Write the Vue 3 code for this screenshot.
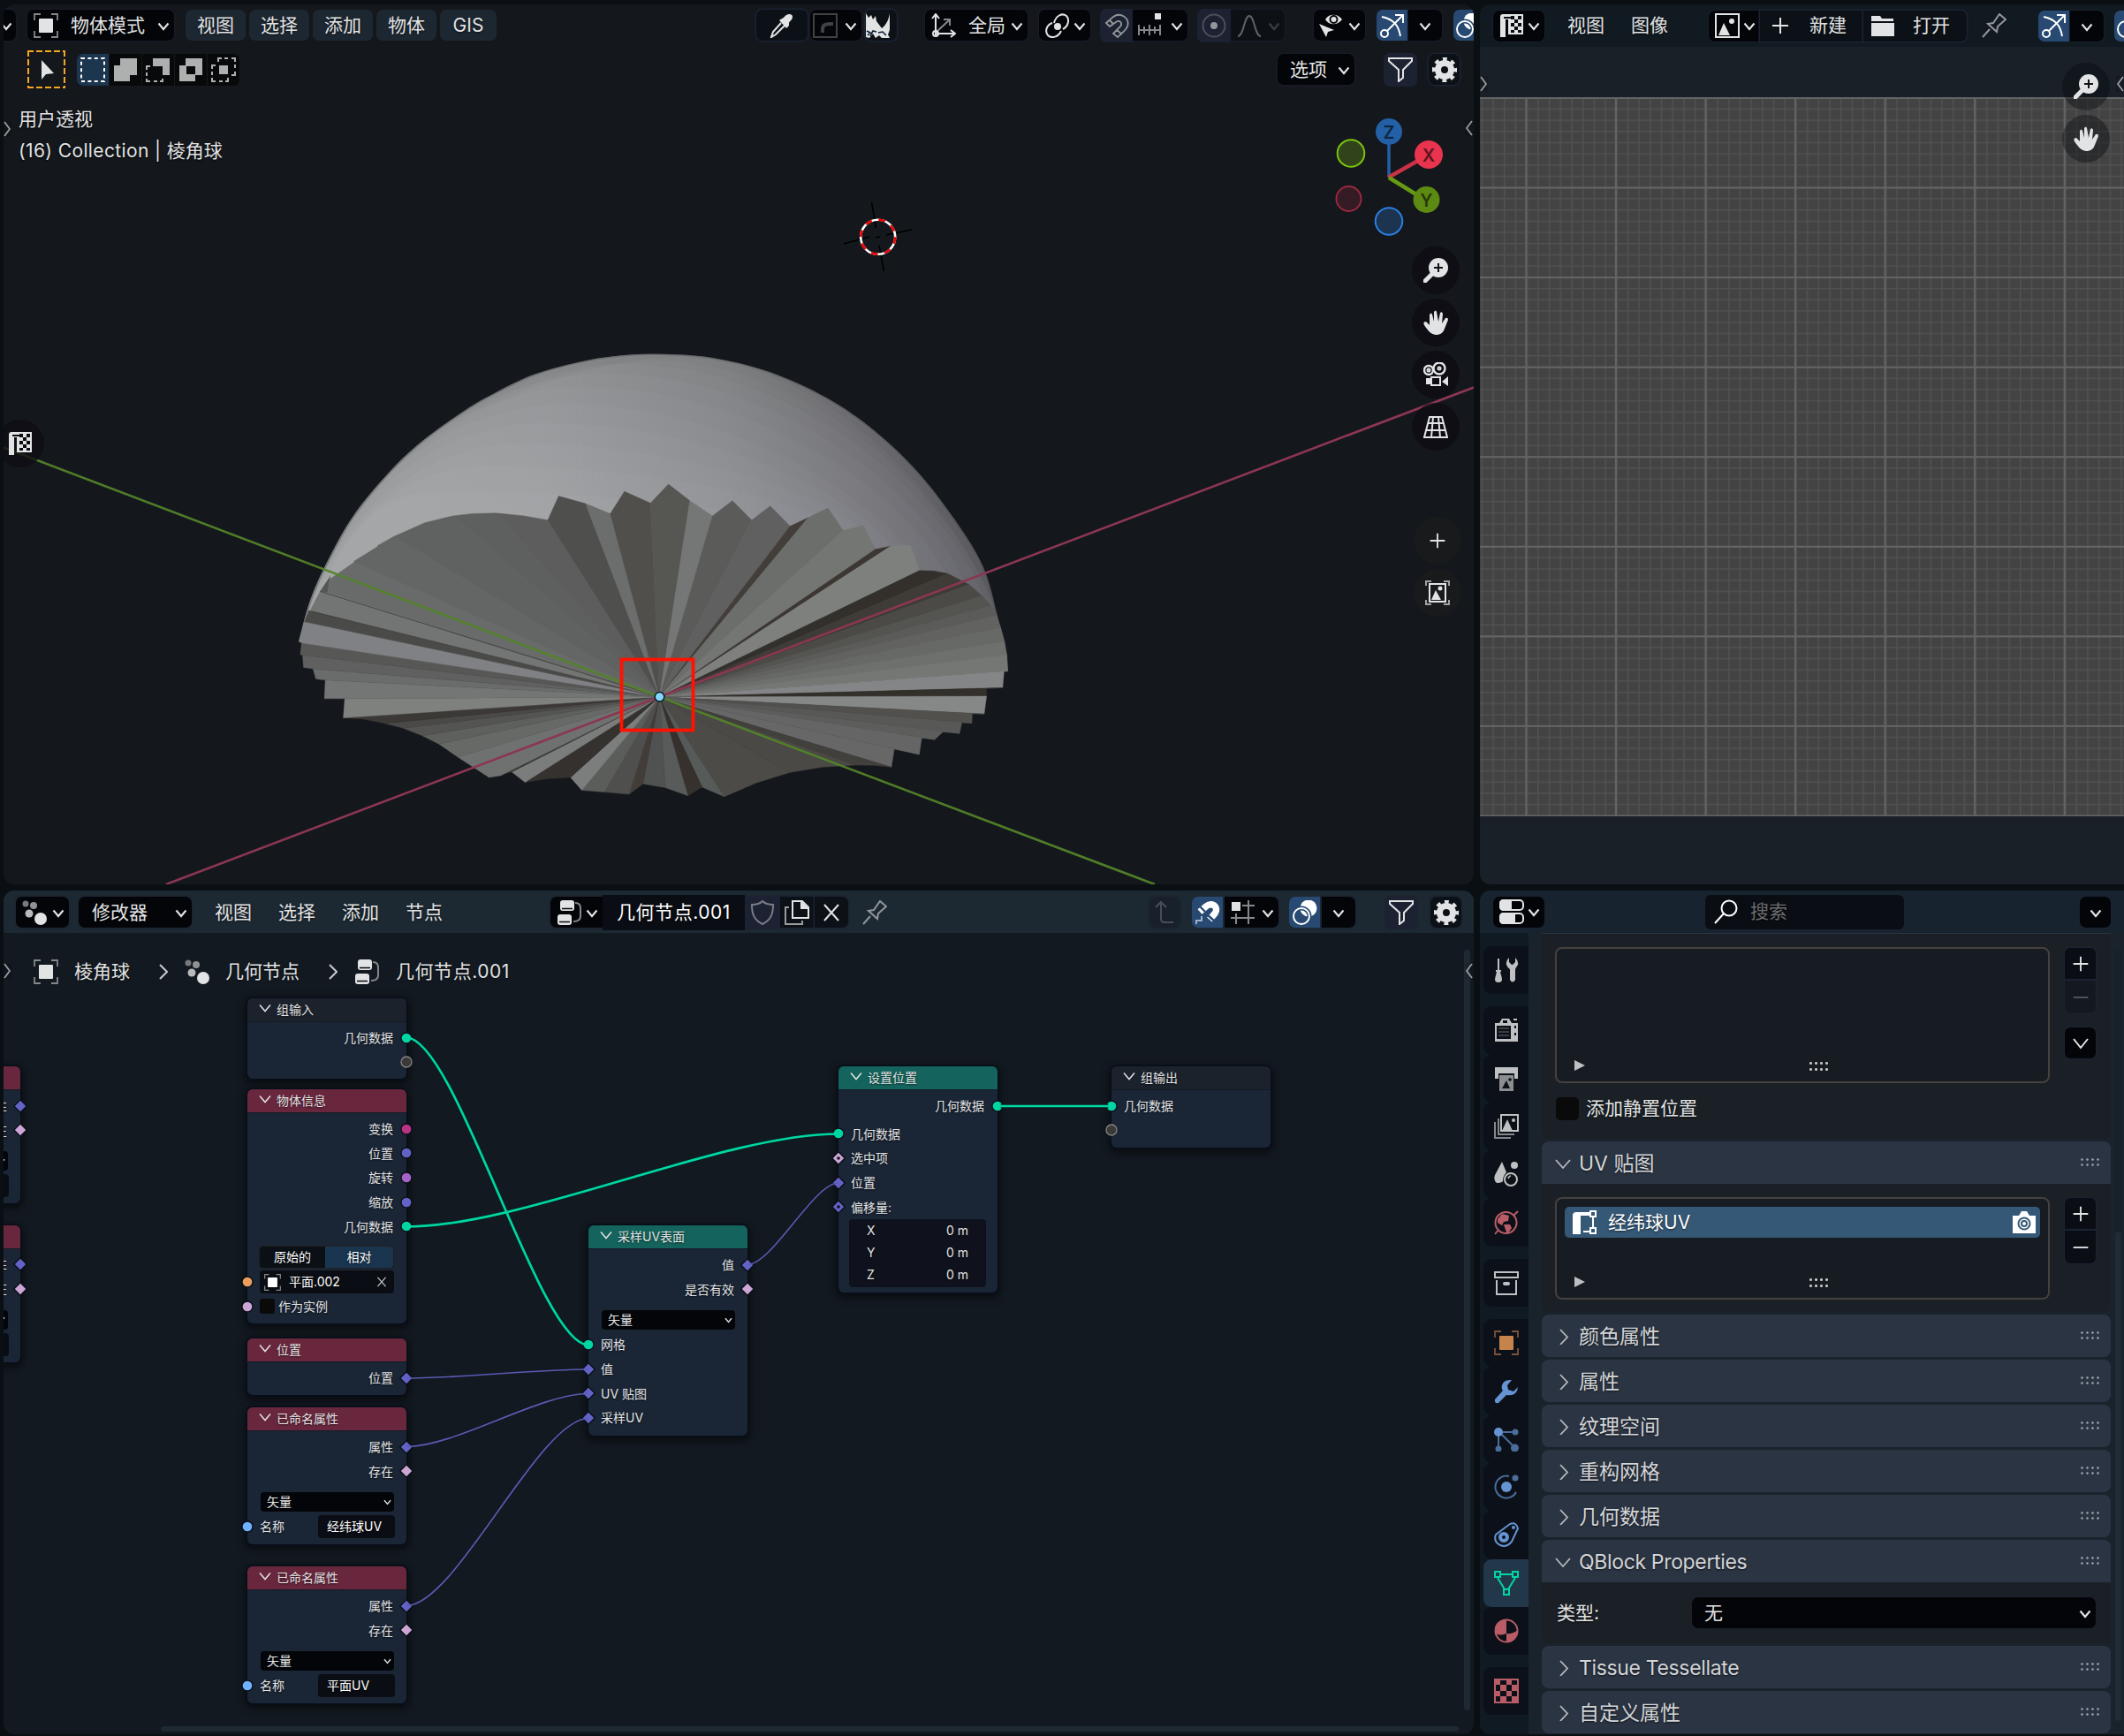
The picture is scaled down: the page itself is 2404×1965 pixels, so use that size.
<script setup>
const icons = {
  object: '<g stroke="#85888b" stroke-width="1.8"><path d="M1 8V1H8M20 1H27V8M27 20V27H20M8 27H1V20"/></g><rect x="6" y="6" width="16" height="16" rx="1" fill="currentColor" stroke="none"/>',
  cursor: '<path d="M8 3V25L13 19L22 18Z" fill="currentColor" stroke="none"/>',
  box: '<rect x="1" y="1" width="26" height="26" stroke-width="2" stroke-dasharray="4 3.4"/>',
  union: '<path d="M8 1H27V20H19V27H1V9H8Z" fill="currentColor" stroke="none"/>',
  sub: '<path d="M8 1H27V20H19V10H8Z" fill="currentColor" stroke="none"/><path d="M5 10H1V14M1 17V21M1 24V27H5M9 27H13M16 27H19V24" stroke-width="2"/>',
  diff: '<path d="M8 1H27V20H19V27H1V9H8ZM9 10V19H19V10Z" fill="currentColor" fill-rule="evenodd" stroke="none"/>',
  inter: '<rect x="9" y="9" width="10" height="10" fill="currentColor" stroke="none"/><path d="M8 5V1H12M15 1H19M23 1H27V5M27 8V12M27 16V20H23M5 9H1V13M1 16V20M1 23V27H5M9 27H13M16 27H19V23" stroke-width="2"/>',
  dropper: '<path d="M16 5C19 0 26 0 26 4C26 8 22 9 22 11L22 14L19 17L11 8L14 6Z" fill="currentColor" stroke="none"/><path d="M13 11L4 21L2 27L7 24L17 14"/>',
  corner: '<rect x="1" y="1" width="26" height="26" stroke="#3f4143"/><path d="M11 22V18C11 13 14 12 23 12" stroke="#3f4143" stroke-width="4"/>',
  rhino: '<path d="M1 0L4 5L7 2L9 7L12 3L13 9L19 17C24 13 27 7 28 0C30 9 29 18 26 24L28 28H19L16 25L12 28L9 23L5 28L1 27Z" fill="currentColor" stroke="none"/><path d="M2 20L6 22L3 25M6 26L9 20L13 21M15 22L20 21L24 25" stroke="#0a2038" stroke-width="1.600"/>',
  axes: '<path d="M5 26V2M1 6L5 1L9 6M5 23H26M22 19L27 23L22 27"/><path d="M6 21L20 8M14 7H21V14" stroke="#85888b"/><circle cx="5" cy="23" r="3"/>',
  pivot: '<circle cx="14" cy="15" r="4" fill="currentColor" stroke="none"/><path d="M10 11C12 3 19 -1 24 3C28 7 26 15 20 18M18 20C15 27 7 29 3 25C-1 20 2 13 8 11"/>',
  magnet: '<path d="M2 11L10 4C19 -2 29 6 26 15C24 20 19 23 15 27L10 23L18 15C21 11 17 7 13 10L6 15ZM6 8L10 12M14 19L19 23" stroke-width="1.8"/>',
  incr: '<path d="M1 19H27M2 13V25M8 15V23M14 13V25M20 15V23M26 13V25" stroke="#85888b"/><rect x="20" y="0" width="7" height="7" fill="currentColor" stroke="none"/>',
  prop: '<circle cx="14" cy="14" r="12.5" stroke="#4a4f58"/><circle cx="14" cy="14" r="4" fill="currentColor" stroke="none"/>',
  curve: '<path d="M1 26C8 26 8 3 14 3S20 26 27 26"/>',
  eye: '<path d="M8 7C12 0 22 0 27 7C22 14 12 14 8 7Z" fill="currentColor" stroke="none"/><circle cx="17.500" cy="7" r="4" fill="none" stroke="#06080b" stroke-width="2"/><path d="M1 12L18 19L11 21L9 27Z" fill="currentColor" stroke="none"/>',
  gizmo: '<path d="M2 4C16 7 21 14 23 26"/><circle cx="5" cy="23" r="4"/><path d="M8 20L26 2M17 2H26V11"/>',
  overlay: '<circle cx="18" cy="9" r="9.500" fill="currentColor" stroke="none"/><circle cx="10" cy="18" r="9" stroke="#284a72" stroke-width="5"/><circle cx="10" cy="18" r="9"/>',
  filter: '<path d="M1 1H27V4L17 14V23L12 27V14L1 4Z"/>',
  gear: '<circle cx="14" cy="14" r="7.500" stroke-width="7"/><circle cx="14" cy="14" r="12.200" stroke-width="4" stroke-dasharray="4.800 4.780" stroke-dashoffset="2.400"/>',
  uv: '<path d="M4 1H27V24H10V7H7V27H1V4Q1 1 4 1Z" fill="currentColor" stroke="none"/><path d="M13 3h4v4h-4zM21 3h4v4h-4zM17 7h4v4h-4zM13 11h4v4h-4zM21 11h4v4h-4zM17 15h4v4h-4zM13 19h4v3h-4zM21 19h4v3h-4zM5 4h8v2h-8z" fill="#0a0d11" stroke="none"/>',
  image: '<rect x="1" y="1" width="26" height="26"/><path d="M4 25L10 11L17 25Z" fill="currentColor" stroke="none"/><circle cx="19" cy="9" r="3" fill="currentColor" stroke="none"/>',
  plus: '<path d="M14 5V23M5 14H23"/>',
  minus: '<path d="M5 14H23"/>',
  folder: '<path d="M1 3H11L13 6H26V9H1ZM1 11H27V26H1Z" fill="currentColor" stroke="none"/>',
  pin: '<path d="M1 27L9 18M7 12L17 21L18 15L27 7L20 1L13 11Z"/>',
  dots: '<circle cx="4" cy="4" r="3.500" fill="#77797c" stroke="none"/><circle cx="13" cy="6" r="4" fill="#8f9193" stroke="none"/><circle cx="8" cy="15" r="4.500" fill="#b9babb" stroke="none"/><circle cx="21" cy="21" r="7" fill="currentColor" stroke="none"/>',
  tree: '<rect x="4" y="0" width="16" height="12" rx="3" fill="currentColor" stroke="none"/><rect x="1" y="16" width="16" height="12" rx="3" fill="currentColor" stroke="none"/><path d="M6 9.500H18M3 24.500H15" stroke="#06080b" stroke-width="1.600"/><path d="M21 3Q27 3 27 9V18Q27 24 19 24" stroke="#85888b"/>',
  shield: '<path d="M14 1C17 4 22 5 26 5C26 15 24 22 14 27C4 22 2 15 2 5C6 5 11 4 14 1Z"/>',
  copy: '<path d="M9 1H20L27 8V20H9Z"/><path d="M19 1V9H27" fill="currentColor"/><path d="M5 8H1V27H20V23" stroke="#9a9c9e"/>',
  close: '<path d="M6 5L22 23M22 5L6 23"/>',
  up: '<path d="M9 2V21Q9 25 13 25H23M3 8L9 2L15 8"/>',
  snap: '<path d="M5 13L12 7C19 1 27 8 22 15L16 22" stroke-width="7.500"/><path d="M11 13L4 6M22 24L13 16" stroke="#284a72" stroke-width="2.400"/><path d="M1 27V23H7V18" stroke="#9fb1c6"/>',
  snapgrid: '<path d="M13 6H27M20 0V27M0 20H27M6 15V27" stroke="#85888b"/><rect x="1" y="2" width="10" height="10" fill="currentColor" stroke="none"/>',
  toggles: '<rect x="1" y="1" width="26" height="11" rx="4"/><path d="M5 1H13V12H5Q1 12 1 8V5Q1 1 5 1Z" fill="currentColor"/><rect x="1" y="16" width="26" height="11" rx="4"/><path d="M5 16H17V27H5Q1 27 1 23V20Q1 16 5 16Z" fill="currentColor"/>',
  search: '<circle cx="17" cy="10" r="8.500"/><path d="M11 16L1 27"/>',
  zoom: '<circle cx="17" cy="11" r="11" fill="currentColor" stroke="none"/><path d="M10 18L2 26" stroke-width="5" stroke-linecap="round"/><path d="M17 6V16M12 11H22" stroke="#101216"/>',
  hand: '<path d="M7 17L7 5Q9 2 10 5L12 13V2Q14 -1 15 2L17 13L19 3Q21 1 22 4L21 15L25 9Q28 8 28 11L24 21C22 27 18 28 14 28C8 27 5 23 1 17Q-1 13 3 13Z" fill="currentColor" stroke="none"/>',
  camera: '<circle cx="6" cy="9" r="5" stroke-width="2.400"/><circle cx="18" cy="7" r="6.500" stroke-width="2.400"/><circle cx="6" cy="9" r="1.500"/><circle cx="18" cy="7" r="1.500"/><rect x="9" y="17" width="10" height="9"/><path d="M3 18V25H8V18ZM28 16V27L21 22Z" fill="currentColor" stroke="none"/>',
  grid: '<path d="M7 3H21L27 26H1ZM11 3L9 26M17 3L19 26M6 10H23M3 18H25"/>',
  viewimg: '<g stroke="#a0a2a4"><path d="M1 6V1H7M21 1H27V6M27 22V27H21M7 27H1V22"/></g><rect x="5" y="4" width="18" height="20"/><path d="M7 22L12 11L18 22Z" fill="currentColor" stroke="none"/><circle cx="17" cy="9" r="2.500" fill="currentColor" stroke="none"/>',
  tool: '<path d="M5 1V14M2 15H8" /><path d="M3 16H7L8 20Q11 28 5 28T2 20Z" fill="currentColor" stroke="none"/><path d="M17 0V5L20 8H21L24 5V0Q28 4 27 8Q25 11 24 13V25Q21 30 18 25V13Q15 11 14 8Q13 4 17 0Z" fill="currentColor" stroke="none"/>',
  render: '<path d="M1 6H6L9 1H17L20 6H27V27H1ZM10 3V6H15V3ZM3 9V24H19V9ZM23 9V12H25V9ZM23 17V20H25V17Z" fill="currentColor" fill-rule="evenodd" stroke="none"/><path d="M5 12H17M5 16H17M5 20H17" stroke-width="1.200" stroke="#666a6f"/><path d="M22 2H26"/>',
  output: '<path d="M1 1H27V14H23V8H5V14H1Z" fill="currentColor" stroke="none"/><path d="M6 10H22V28H6Z" fill="#8b8d90" stroke="none"/><path d="M9 25L14 16L18 25Z" fill="#0c1119" stroke="none"/><circle cx="18" cy="15" r="1.800" fill="#0c1119" stroke="none"/>',
  layers: '<rect x="8" y="1" width="19" height="18"/><path d="M9 19L15 6L21 19Z" fill="currentColor" stroke="none"/><circle cx="22" cy="7" r="2" fill="currentColor" stroke="none"/><path d="M5 5V23H23M1 9V27H19" stroke="#85888b"/>',
  scene: '<path d="M9 0L14 12Q10 16 10 22Q8 24 3 24Q-1 21 1 15Z" fill="currentColor" stroke="none"/><circle cx="23" cy="4" r="4" fill="currentColor" stroke="none"/><circle cx="19" cy="20" r="7"/><path d="M16 19Q17 16 19 16" stroke-width="1.600"/>',
  world: '<circle cx="13.500" cy="14" r="12"/><path d="M4 10L9 4L17 6L16 12L11 13L9 17L4 14ZM11 16H18L20 20L15 27L13 22Z" fill="currentColor" stroke="none"/><path d="M1 27L5 22M22 6L27 1" />',
  archive: '<rect x="1" y="2" width="26" height="6"/><path d="M3 11V27H25V11"/><rect x="10" y="13" width="8" height="4" rx="2" fill="currentColor" stroke="none"/>',
  wrench: '<path d="M20 1Q11 0 9 7Q8 11 10 13L1 23Q0 28 5 27L14 18Q26 20 27 9L22 14L16 12L15 7Z" fill="currentColor" stroke="none"/>',
  particles: '<g opacity=".7"><path d="M5 8V24M8 8L23 23M10 6H24"/><circle cx="5" cy="25" r="2.500" fill="currentColor"/><circle cx="24" cy="6" r="2.500" fill="currentColor"/><circle cx="23.500" cy="24" r="3.500" fill="currentColor"/></g><circle cx="5" cy="6" r="5" fill="currentColor" stroke="none"/>',
  physics: '<circle cx="14" cy="14" r="6" fill="currentColor" stroke="none"/><path d="M17 2A12.500 12.500 0 1 0 25 20" opacity=".7"/><circle cx="24" cy="4" r="3.500" fill="currentColor" stroke="none" opacity=".7"/>',
  constraint: '<circle cx="11" cy="17" r="4" stroke-width="4"/><path d="M2 14L18 2Q25 -1 27 7L20 22Q14 29 7 26Q-1 22 2 14Z"/><circle cx="22" cy="6" r="2" fill="currentColor" stroke="none"/>',
  mesh: '<path d="M6 4H22M4 8L12 21M24 8L16 21"/><rect x="1" y="1" width="6" height="6"/><rect x="21" y="1" width="6" height="6"/><rect x="11" y="21" width="6" height="6"/>',
  material: '<circle cx="14" cy="14" r="12.500"/><path d="M14 1V17Q6 20 2 17Q-2 3 14 1ZM14 17Q21 18 27 13Q26 27 14 27Z" fill="currentColor" stroke="none"/>',
  texture: '<rect x="1" y="1" width="26" height="26"/><path d="M1 1h6v6h-6zM14 1h6v6h-6zM7 7h7v7h-7zM20 7h7v7h-7zM1 14h6v6h-6zM14 14h6v6h-6zM7 20h7v7h-7zM20 20h7v7h-7z" fill="currentColor" stroke="none"/>',
  uvmap: '<path d="M1 6Q1 2 5 2H21V6H10V27H1Z" fill="currentColor" stroke="none"/><path d="M24 7V20M13 24H21"/><rect x="21" y="1" width="6" height="6"/><rect x="21" y="20" width="6" height="6"/>',
  photo: '<path d="M1 6H8L11 1H17L20 6H27V26H1Z" fill="currentColor" stroke="none"/><circle cx="14" cy="15" r="6.500" stroke="#355876"/><circle cx="14" cy="15" r="3" stroke="#355876"/>'
}

const viewBar = [
  { g: 0, w: 14, c: 'dark clip', chev: 1 },
  { g: 13, w: 166, c: 'dark', icon: 'object', text: '物体模式', chev: 1 },
  { g: 13, w: 68, c: 'menu', text: '视图' },
  { g: 4, w: 68, c: 'menu', text: '选择' },
  { g: 4, w: 68, c: 'menu', text: '添加' },
  { g: 4, w: 68, c: 'menu', text: '物体' },
  { g: 4, w: 64, c: 'menu', text: 'GIS' },
  { g: 294, w: 58, c: 'btn mid', icon: 'dropper' },
  { g: 3, w: 58, c: 'dark tight', icon: 'corner', chev: 1 },
  { g: 4, w: 36, c: 'btn flush', icon: 'rhino' },
  { g: 32, w: 116, c: 'dark', icon: 'axes', text: '全局', chev: 1 },
  { g: 13, w: 58, c: 'dark', icon: 'pivot', chev: 1 },
  { g: 11, w: 37, c: 'tog left mid dim', icon: 'magnet' },
  { g: 0, w: 62, c: 'dark right snug', icon: 'incr', chev: 1 },
  { g: 11, w: 38, c: 'tog left mid dim', icon: 'prop' },
  { g: 0, w: 61, c: 'dark right faint', icon: 'curve', chev: 1 },
  { g: 33, w: 58, c: 'dark snug', icon: 'eye', chev: 1 },
  { g: 13, w: 35, c: 'on left mid', icon: 'gizmo' },
  { g: 1, w: 38, c: 'dark right solo', chev: 1 },
  { g: 13, w: 36, c: 'on left tight', icon: 'overlay' }
]
const imageBar = [
  { g: 15, w: 58, c: 'dark', icon: 'uv', chev: 1 },
  { g: 26, w: 42, c: 'plain', text: '视图' },
  { g: 30, w: 42, c: 'plain', text: '图像' },
  { g: 46, w: 58, c: 'dark left', icon: 'image', chev: 1 },
  { g: 0, w: 117, c: 'btn flat new', icon: 'plus', text: '新建' },
  { g: 0, w: 117, c: 'btn right open-file', icon: 'folder', text: '打开' },
  { g: 17, w: 28, c: 'plain dim', icon: 'pin' },
  { g: 36, w: 35, c: 'on left mid', icon: 'gizmo' },
  { g: 1, w: 38, c: 'dark right solo', chev: 1 },
  { g: 12, w: 36, c: 'on left tight', icon: 'overlay' }
]
const nodeBar = [
  { g: 14, w: 60, c: 'dark', icon: 'dots', chev: 1 },
  { g: 11, w: 128, c: 'dark wide', text: '修改器', chev: 1 },
  { g: 26, w: 42, c: 'plain', text: '视图' },
  { g: 30, w: 42, c: 'plain', text: '选择' },
  { g: 30, w: 42, c: 'plain', text: '添加' },
  { g: 30, w: 42, c: 'plain', text: '节点' },
  { g: 122, w: 59, c: 'dark left', icon: 'tree', chev: 1 },
  { g: 0, w: 161, c: 'name flat', text: '几何节点.001' },
  { g: 0, w: 39, c: 'tog flat mid grey', icon: 'shield' },
  { g: 1, w: 38, c: 'btn flat mid', icon: 'copy' },
  { g: 1, w: 38, c: 'btn right mid', icon: 'close' },
  { g: 16, w: 28, c: 'plain dim', icon: 'pin' },
  { g: 297, w: 35, c: 'ghost mid', icon: 'up' },
  { g: 13, w: 35, c: 'on left mid', icon: 'snap' },
  { g: 2, w: 61, c: 'dark right', icon: 'snapgrid', chev: 1 },
  { g: 12, w: 35, c: 'on left mid', icon: 'overlay' },
  { g: 2, w: 38, c: 'dark right solo', chev: 1 },
  { g: 33, w: 38, c: 'tog mid', icon: 'filter' },
  { g: 14, w: 35, c: 'btn mid', icon: 'gear' }
]
const selectModes = ['box', 'union', 'sub', 'diff', 'inter']

const rim = [[34, 1005], [58, 870], [95, 740], [150, 590], [230, 440], [300, 340], [385, 245], [440, 195], [530, 128], [640, 82], [740, 62], [830, 62], [920, 76], [1030, 120], [1150, 205], [1250, 312], [1340, 445], [1420, 605], [1480, 760], [1510, 920], [1530, 1050]]
const rimPath = rim.reduce((d, p, i) => {
  if (!i) return `M${p}`
  const a = rim[i - 2] || rim[i - 1], b = rim[i - 1], c = rim[i + 1] || p
  return `${d}C${b[0] + (p[0] - a[0]) / 6} ${b[1] + (p[1] - a[1]) / 6} ${p[0] - (c[0] - b[0]) / 6} ${p[1] - (c[1] - b[1]) / 6} ${p}`
}, '')

const wedges = [
  ['95,845 100,800 155,740', '#686b69'], ['155,740 235,660 200,690', '#636564'], ['150,742 235,660', '#646665'],
  ['235,660 300,615 360,592', '#606161'], ['360,592 400,585 450,583', '#5e5f5f'], ['450,583 510,592 560,606', '#5d5d5d'],
  ['560,606 583,527 640,552', '#4f4f4e'], ['640,552 692,585', '#6b6e6c'], ['692,585 722,512 777,550', '#514f4c'],
  ['777,550 815,488 860,542', '#565653'], ['860,542 908,592', '#747775'], ['908,592 950,542 991,606', '#5b5b5a'],
  ['991,606 1030,560 1072,626', '#5f605f'], ['1072,626 1110,598', '#433e3a'], ['1110,598 1152,566 1184,640', '#6b6e6b'],
  ['1184,640 1227,624 1252,702', '#737673'], ['1252,702 1284,692', '#3c3733'], ['1284,692 1326,688 1345,772', '#7e807d'],
  ['1345,772 1375,773 1405,782', '#332f2b'], ['1405,782 1450,818', '#3f3c38'], ['1450,818 1478,855', '#4b4a47'],
  ['1478,855 1497,888', '#545451'], ['1497,888 1508,920', '#5b5b5a'], ['1508,920 1517,960', '#626361'],
  ['1517,960 1525,1005', '#676966'], ['1525,1005 1530,1050', '#6e706d'], ['1530,1050 1532,1102', '#757774'],
  ['1532,1102 1524,1103 1521,1157', '#848586'], ['1521,1157 1487,1160 1487,1185', '#33302b'], ['1487,1185 1482,1243', '#868887'],
  ['1482,1243 1457,1243 1456,1273', '#51504d'], ['1456,1273 1435,1272 1430,1307', '#585857'], ['1430,1307 1395,1302 1378,1327', '#5d5e5c'],
  ['1378,1327 1350,1322 1345,1376', '#646564'], ['1345,1376 1292,1358 1286,1418', '#676767'], ['1286,1418 1250,1412 1210,1411', '#42403d'],
  ['1210,1411 1140,1418 1070,1436', '#4a4946'], ['1070,1436 1000,1470 933,1515', '#4c4b48'], ['933,1515 886,1484', '#565a58'],
  ['886,1484 856,1512', '#37312e'], ['856,1512 808,1485', '#585b5a'], ['808,1485 761,1473', '#505151'], ['761,1473 732,1507', '#433d3a'],
  ['732,1507 680,1500', '#4f4f4d'], ['680,1500 632,1494', '#5b5d5b'], ['632,1494 608,1452', '#7b7e7c'], ['608,1452 560,1456 512,1468', '#34312e'],
  ['512,1468 484,1434', '#7a7d7b'], ['484,1434 472,1438 460,1446', '#3b3733'], ['460,1446 436,1452 370,1385', '#6e716f'],
  ['370,1385 330,1342', '#676967'], ['330,1342 295,1315', '#5e605e'], ['295,1315 255,1290', '#545452'], ['255,1290 215,1274', '#4a4947'],
  ['215,1274 170,1260 128,1256', '#3b3835'], ['128,1256 131,1193', '#7f817e'], ['131,1193 88,1193 90,1132', '#737674'],
  ['90,1132 70,1128 64,1095', '#6a6c6b'], ['64,1095 44,1090 42,1050', '#5f605f'], ['42,1050 37,1048 40,1010', '#575756'],
  ['40,1010 34,1005 46,940', '#808184'], ['46,940 55,905', '#4a4a48'], ['55,905 66,904', '#383633'], ['58,903 79,840', '#727573'], ['79,840 95,848', '#34312e']
]
const bands = [
  [830, 72, 1530, 1000], [780, 82, 1510, 920], [720, 93, 1480, 855], [680, 125, 1440, 810], [630, 168, 1400, 780],
  [590, 225, 1345, 765], [545, 287, 1285, 690], [500, 355, 1225, 640], [430, 428, 1160, 620], [340, 510, 1080, 620]
].map(([px, py, rx, ry]) =>
  `M40 960C${90 + py / 12} ${py + (960 - py) * 0.3} ${px - 230 + py / 6} ${py} ${px} ${py}C${px + (rx - px) * 0.5} ${py + 4} ${rx - (rx - px) * 0.1} ${ry - (ry - py) * 0.4} ${rx} ${ry}L796 1187Z`)

const named = (x, y, v) => ({
  x, y, h: 155, tone: 'attr', title: v ? '已命名属性' : '', rows: [
    { out: '属性', s: 'vec', d: 1 }, { out: '存在', s: 'bool', d: 1 }, { k: 'drop', text: v ? '矢量' : '' }, { k: 'strname', in: v ? '名称' : '', s: 'str', value: v }
  ]
})
const nodes = [
  named(-157, 1207, ''), named(-157, 1386.500, ''),
  { x: 280, y: 1130, h: 91, tone: 'plainhead', title: '组输入', rows: [{ out: '几何数据', s: 'geo' }, { out: '', s: 'none' }] },
  { x: 280, y: 1233, h: 265, tone: 'attr', title: '物体信息', rows: [
    { out: '变换', s: 'mat' }, { out: '位置', s: 'vec' }, { out: '旋转', s: 'rot' }, { out: '缩放', s: 'vec' }, { out: '几何数据', s: 'geo' },
    { k: 'seg' }, { k: 'field', s: 'obj' }, { k: 'check', in: '作为实例', s: 'bool' }] },
  { x: 280, y: 1515, h: 64, tone: 'attr', title: '位置', rows: [{ out: '位置', s: 'vec', d: 1 }] },
  named(280, 1593, '经纬球UV'), named(280, 1773, '平面UV'),
  { x: 666, y: 1387, h: 238, tone: 'mesh', title: '采样UV表面', rows: [
    { out: '值', s: 'vec', d: 1 }, { out: '是否有效', s: 'bool', d: 1 }, { k: 'drop', text: '矢量' },
    { in: '网格', s: 'geo' }, { in: '值', s: 'vec', d: 1 }, { in: 'UV 贴图', s: 'vec', d: 1 }, { in: '采样UV', s: 'vec', d: 1 }] },
  { x: 949, y: 1207, h: 256, tone: 'mesh', title: '设置位置', rows: [
    { out: '几何数据', s: 'geo' }, { k: 'space' }, { in: '几何数据', s: 'geo' }, { in: '选中项', s: 'bool', d: 1, hole: 1 },
    { in: '位置', s: 'vec', d: 1 }, { in: '偏移量:', s: 'vec', d: 1, hole: 1 }, { k: 'vector' }] },
  { x: 1258, y: 1207, h: 92, tone: 'plainhead', title: '组输出', rows: [{ in: '几何数据', s: 'geo' }, { in: '', s: 'none' }] }
]
const sock = { vec: '#6363c7', bool: '#cca6d6', geo: '#00d6a3', mat: '#b83385', rot: '#a663c7', obj: '#ed9e5c', str: '#70b2ff', none: '#3c3a38' }
const link = (a, b, c, d) => `M${a} ${b - 1056}C${a + (c - a) * 0.27} ${b - 1056} ${c - (c - a) * 0.27} ${d - 1056} ${c} ${d - 1056}`
const geoLinks = [link(460, 1174.500, 666, 1522.500), link(460, 1388.500, 949, 1283.500), link(1129, 1252, 1258, 1252)]
const vecLinks = [link(460, 1560, 666, 1550), link(460, 1637.500, 666, 1577.500), link(460, 1817.500, 666, 1605.500), link(846, 1431.500, 949, 1339)]

const tabGroups = [
  [['tool', '']],
  [['render', ''], ['output', ''], ['layers', ''], ['scene', ''], ['world', 'red']],
  [['archive', '']],
  [['object', 'orange'], ['wrench', 'blue'], ['particles', 'blue'], ['physics', 'blue'], ['constraint', 'blue'], ['mesh', 'active'], ['material', 'red']],
  [['texture', 'red']]
]
const closedPanels = ['颜色属性', '属性', '纹理空间', '重构网格', '几何数据']
</script>

<template>
  <div class="app">
    <section class="area view3d">
      <svg class="scene" width="1664" height="996" viewBox="4 5 1664 996">
        <defs>
          <linearGradient id="dome" x1="0" y1="0" x2="1" y2="0">
            <stop offset="0" stop-color="#858889" /><stop offset=".35" stop-color="#86888a" /><stop offset=".6" stop-color="#7b7c7e" /><stop offset=".8" stop-color="#69696d" /><stop offset="1" stop-color="#55555a" />
          </linearGradient>
          <linearGradient id="band" x1="0" y1="1" x2="1" y2=".4">
            <stop offset="0" stop-color="#fff" stop-opacity=".03" /><stop offset=".5" stop-color="#fff" stop-opacity=".03" /><stop offset="1" stop-color="#dfe2ff" stop-opacity=".024" />
          </linearGradient>
          <clipPath id="domeClip"><path :d="rimPath + 'L1532 1102L796 1187Z'" /></clipPath>
        </defs>
        <g transform="translate(320 380) scale(.53571 .34439)">
          <g clip-path="url(#domeClip)">
            <rect width="1568" height="1568" fill="url(#dome)" />
            <path v-for="b in bands" :key="b" :d="b" fill="url(#band)" />
            <path :d="rimPath" fill="none" stroke="#4c4d50" stroke-opacity=".45" stroke-width="7" />
          </g>
          <polygon points="79,840 101,788 95,845" fill="#565654" />
          <polygon v-for="w in wedges" :key="w[0]" :points="w[0] + ' 796,1187'" :fill="w[1]" :stroke="w[1]" stroke-width="1" />
        </g>
        <path d="M4 506.500L746.500 788.800L1307 1001" stroke="#558629" stroke-width="2.600" stroke-opacity=".92" />
        <path d="M188 1001L746.500 788.800L1668 438.500" stroke="#8c3652" stroke-width="2.600" />
        <rect x="703.500" y="746.500" width="81" height="80" fill="none" stroke="#ff1200" stroke-width="3.800" />
        <circle cx="746.500" cy="788.800" r="5.300" fill="#82d8ff" stroke="#0b1a22" stroke-width="1.500" />
        <g stroke="#000" stroke-width="1.600"><path d="M986.500 229L991.500 258M995 278L1000.500 307M955 276L984 268M1003 266L1032 260M991 269l5-1" /></g>
        <circle cx="993.700" cy="268.300" r="19.500" fill="none" stroke="#fff" stroke-width="2.600" />
        <circle cx="993.700" cy="268.300" r="19.500" fill="none" stroke="#f00000" stroke-width="2.600" stroke-dasharray="7.660" />
        <g stroke-width="4.500">
          <path d="M1572 200V160" stroke="#2460a5" stroke-width="3.500" /><path d="M1571 201L1610 179" stroke="#c93247" /><path d="M1572 201L1606 222" stroke="#679a12" />
        </g>
        <circle cx="1572" cy="149" r="15" fill="#2460a5" /><circle cx="1617" cy="175" r="16" fill="#e8344e" /><circle cx="1614.500" cy="226" r="15" fill="#5c8a12" />
        <circle cx="1529" cy="173.500" r="15.300" fill="#30431a" stroke="#7cc20e" stroke-width="2" />
        <circle cx="1526.500" cy="225" r="14" fill="#341b24" stroke="#99293f" stroke-width="2" />
        <circle cx="1572" cy="250.500" r="15.300" fill="#1c3450" stroke="#2a7fe2" stroke-width="2" />
        <g class="axis"><text x="1572" y="156.500">Z</text><text x="1617" y="182.500">X</text><text x="1614.500" y="233.500">Y</text></g>
      </svg>
      <header class="bar">
        <div v-for="(b, i) in viewBar" :key="i" class="item" :class="b.c" :style="{ marginLeft: b.g + 'px', width: b.w + 'px' }">
          <svg v-if="b.icon" class="ico" viewBox="0 0 28 28" v-html="icons[b.icon]" />
          <span v-if="b.text" class="lbl">{{ b.text }}</span>
          <svg v-if="b.chev" class="chev" viewBox="0 0 14 10"><path d="M1.500 1.500L7 8L12.500 1.500" /></svg>
        </div>
      </header>
      <div class="subbar">
        <div class="seltool"><svg class="ico" viewBox="0 0 28 28" v-html="icons.cursor" /></div>
        <div class="modes"><span v-for="m in selectModes" :key="m" :class="{ cur: m === 'box' }"><svg class="ico" viewBox="0 0 28 28" v-html="icons[m]" /></span></div>
        <div class="item dark options"><span class="lbl">选项</span><svg class="chev" viewBox="0 0 14 10"><path d="M1.500 1.500L7 8L12.500 1.500" /></svg></div>
        <div class="item tog mid filt"><svg class="ico" viewBox="0 0 28 28" v-html="icons.filter" /></div>
        <div class="item btn mid set"><svg class="ico" viewBox="0 0 28 28" v-html="icons.gear" /></div>
      </div>
      <div class="info"><div>用户透视</div><div><span class="latin">(16) Collection | </span>棱角球</div></div>
      <svg class="edge el" viewBox="0 0 9 18"><path d="M1 1L7 9L1 17" /></svg>
      <svg class="edge er" viewBox="0 0 9 18"><path d="M8 1L2 9L8 17" /></svg>
      <div class="uvbtn"><svg class="ico" viewBox="0 0 28 28" v-html="icons.uv" /></div>
      <div class="nav">
        <span v-for="n in ['zoom', 'hand', 'camera', 'grid']" :key="n"><svg class="ico" viewBox="0 0 28 28" v-html="icons[n]" /></span>
        <span class="add"><svg class="ico sm" viewBox="0 0 28 28" v-html="icons.plus" /></span>
        <span class="addb"><svg class="ico" viewBox="0 0 28 28" v-html="icons.viewimg" /></span>
      </div>
    </section>

    <section class="area image">
      <header class="bar">
        <div v-for="(b, i) in imageBar" :key="i" class="item" :class="b.c" :style="{ marginLeft: b.g + 'px', width: b.w + 'px' }">
          <svg v-if="b.icon" class="ico" viewBox="0 0 28 28" v-html="icons[b.icon]" />
          <span v-if="b.text" class="lbl">{{ b.text }}</span>
          <svg v-if="b.chev" class="chev" viewBox="0 0 14 10"><path d="M1.500 1.500L7 8L12.500 1.500" /></svg>
        </div>
      </header>
      <svg class="uvgrid" width="729" height="814">
        <defs>
          <pattern id="minor" width="12.695" height="12.695" patternUnits="userSpaceOnUse" x="52.400" y="0"><path d="M0 0H12.700M0 0V12.700" stroke="#515151" stroke-width="3" /></pattern>
          <pattern id="major" width="101.560" height="101.560" patternUnits="userSpaceOnUse" x="52.400" y="1"><path d="M0 0H101.560M0 0V101.560M101.560 0V101.560M0 101.560H101.560" stroke="#646464" stroke-width="2.200" /></pattern>
        </defs>
        <rect width="729" height="814" fill="#434344" /><rect width="729" height="814" fill="url(#minor)" /><rect width="729" height="814" fill="url(#major)" />
      </svg>
      <div class="nav inav"><span v-for="n in ['zoom', 'hand']" :key="n"><svg class="ico" viewBox="0 0 28 28" v-html="icons[n]" /></span></div>
      <svg class="edge il" viewBox="0 0 9 18"><path d="M1 1L7 9L1 17" /></svg>
      <svg class="edge ir" viewBox="0 0 9 18"><path d="M8 1L2 9L8 17" /></svg>
    </section>

    <section class="area nodes">
      <header class="bar">
        <div v-for="(b, i) in nodeBar" :key="i" class="item" :class="b.c" :style="{ marginLeft: b.g + 'px', width: b.w + 'px' }">
          <svg v-if="b.icon" class="ico" viewBox="0 0 28 28" v-html="icons[b.icon]" />
          <span v-if="b.text" class="lbl">{{ b.text }}</span>
          <svg v-if="b.chev" class="chev" viewBox="0 0 14 10"><path d="M1.500 1.500L7 8L12.500 1.500" /></svg>
        </div>
      </header>
      <div class="canvas">
        <div class="crumbs">
          <svg class="ico" viewBox="0 0 28 28" v-html="icons.object" /><span class="c1">棱角球</span>
          <svg class="sep" viewBox="0 0 10 18"><path d="M1 1L9 9L1 17" /></svg>
          <svg class="ico" viewBox="0 0 28 28" v-html="icons.dots" /><span class="c2">几何节点</span>
          <svg class="sep" viewBox="0 0 10 18"><path d="M1 1L9 9L1 17" /></svg>
          <svg class="ico" viewBox="0 0 28 28" v-html="icons.tree" /><span class="c3">几何节点.001</span>
        </div>
        <div v-for="(n, i) in nodes" :key="i" class="node" :class="n.tone" :style="{ left: n.x - 4 + 'px', top: n.y - 1056 + 'px', height: n.h + 'px' }">
          <div class="nhead"><svg viewBox="0 0 14 10"><path d="M1 1.500L7 8.500L13 1.500" /></svg>{{ n.title }}</div>
          <div class="nbody">
            <template v-for="(r, j) in n.rows" :key="j">
              <div v-if="r.k === 'drop'" class="drop"><span>{{ r.text }}</span><svg viewBox="0 0 14 10"><path d="M1.500 1.500L7 8L12.500 1.500" /></svg></div>
              <div v-else-if="r.k === 'seg'" class="seg"><span>原始的</span><span class="cur">相对</span></div>
              <div v-else-if="r.k === 'space'" class="space" />
              <div v-else-if="r.k === 'vector'" class="vector"><div v-for="a in ['X', 'Y', 'Z']" :key="a"><span>{{ a }}</span><span>0 m</span></div></div>
              <div v-else class="row" :class="[r.out !== undefined ? 'out' : 'in', r.k]">
                <div v-if="r.k === 'field'" class="fieldbox"><svg class="ico" viewBox="0 0 28 28" v-html="icons.object" /><span>平面.002</span><svg class="x" viewBox="0 0 28 28" v-html="icons.close" /></div>
                <i v-if="r.k === 'check'" class="cb" />
                <span v-if="r.k !== 'field'">{{ r.out ?? r.in }}</span>
                <div v-if="r.k === 'strname'" class="valuebox">{{ r.value }}</div>
                <svg class="sock" viewBox="-9 -9 18 18">
                  <path v-if="r.d" d="M0 -7.200L7.200 0L0 7.200L-7.200 0Z" :fill="sock[r.s]" stroke="#0b1018" stroke-width="1.400" />
                  <circle v-else r="6" :fill="sock[r.s]" :stroke="r.s === 'none' ? '#858482' : '#0b1018'" stroke-width="1.300" />
                  <circle v-if="r.hole" r="1.800" fill="#0c0f16" />
                </svg>
              </div>
            </template>
          </div>
        </div>
        <svg class="links" width="1664" height="907" viewBox="4 0 1664 907">
          <g fill="none" stroke="#08201f" stroke-width="4.600"><path v-for="l in geoLinks" :key="l" :d="l" pathLength="100" stroke-dasharray="0 3 94 3" /></g>
          <g fill="none" stroke="#00d6a3" stroke-width="2.700"><path v-for="l in geoLinks" :key="l" :d="l" /></g>
          <g fill="none" stroke="#5a5ab4" stroke-width="1.600"><path v-for="l in vecLinks" :key="l" :d="l" /></g>
        </svg>
        <div class="vscroll" /><div class="hscroll" />
        <svg class="edge nl" viewBox="0 0 9 18"><path d="M1 1L7 9L1 17" /></svg>
        <svg class="edge nr" viewBox="0 0 9 18"><path d="M8 1L2 9L8 17" /></svg>
      </div>
    </section>

    <section class="area props">
      <header class="bar">
        <div class="item dark ptype"><svg class="ico" viewBox="0 0 28 28" v-html="icons.toggles" /><svg class="chev" viewBox="0 0 14 10"><path d="M1.500 1.500L7 8L12.500 1.500" /></svg></div>
        <div class="search"><svg class="ico" viewBox="0 0 28 28" v-html="icons.search" /><span>搜索</span></div>
        <div class="item dark solo pmore"><svg class="chev" viewBox="0 0 14 10"><path d="M1.500 1.500L7 8L12.500 1.500" /></svg></div>
      </header>
      <div class="pmain">
        <nav class="tabs">
          <div v-for="(g, i) in tabGroups" :key="i" class="tgroup">
            <span v-for="t in g" :key="t[0]" :class="t[1]"><svg class="ico" viewBox="0 0 28 28" v-html="icons[t[0]]" /></span>
          </div>
        </nav>
        <div class="panels">
          <div class="pbody first">
            <div class="listrow">
              <div class="list tall"><i class="tri" /><i class="grip" /></div>
              <div class="side">
                <span class="sb top"><svg class="ico sm" viewBox="0 0 28 28" v-html="icons.plus" /></span>
                <span class="sb bot off"><svg class="ico sm" viewBox="0 0 28 28" v-html="icons.minus" /></span>
                <span class="sb more"><svg class="ico big" viewBox="0 0 18 14"><path d="M1 2L9 12L17 2" /></svg></span>
              </div>
            </div>
            <div class="checkrow"><i class="pcb" /><span>添加静置位置</span></div>
          </div>
          <div class="phead open"><svg viewBox="0 0 18 18"><path d="M1 5L9 14L17 5" /></svg><span>UV 贴图</span><i class="grip g2" /></div>
          <div class="pbody uvb">
            <div class="listrow">
              <div class="list short">
                <div class="sel"><svg class="ico" viewBox="0 0 28 28" v-html="icons.uvmap" /><span>经纬球UV</span><svg class="ico" viewBox="0 0 28 28" v-html="icons.photo" /></div>
                <i class="tri" /><i class="grip" />
              </div>
              <div class="side">
                <span class="sb top"><svg class="ico sm" viewBox="0 0 28 28" v-html="icons.plus" /></span>
                <span class="sb bot"><svg class="ico sm" viewBox="0 0 28 28" v-html="icons.minus" /></span>
              </div>
            </div>
          </div>
          <div v-for="p in closedPanels" :key="p" class="phead"><svg viewBox="0 0 18 18"><path d="M6 1L14 9.500L6 18" /></svg><span>{{ p }}</span><i class="grip g2" /></div>
          <div class="phead open"><svg viewBox="0 0 18 18"><path d="M1 5L9 14L17 5" /></svg><span class="narrow">QBlock Properties</span><i class="grip g2" /></div>
          <div class="pbody qb"><span>类型:</span><div class="item dark"><span class="lbl">无</span><svg class="chev" viewBox="0 0 14 10"><path d="M1.500 1.500L7 8L12.500 1.500" /></svg></div></div>
          <div class="phead"><svg viewBox="0 0 18 18"><path d="M6 1L14 9.500L6 18" /></svg><span class="narrow">Tissue Tessellate</span><i class="grip g2" /></div>
          <div class="phead"><svg viewBox="0 0 18 18"><path d="M6 1L14 9.500L6 18" /></svg><span>自定义属性</span><i class="grip g2" /></div>
        </div>
        <div class="pscroll"><i /></div>
      </div>
    </section>
  </div>
</template>

<style>
body { margin: 0; background: #0a0f13; overflow: hidden; }
</style>

<style scoped>
.app {
  width: 2404px; height: 1965px; box-sizing: border-box; padding: 5px 0 2px 4px; background: #0a0f13;
  display: grid; grid-template-columns: 1664px 729px; grid-template-rows: 996px 955px; gap: 7px;
  font: 21px/28px Inter, "Noto Sans CJK SC", sans-serif; color: #e2e3e4; text-shadow: 0 1px 2px rgba(0, 0, 0, .6);
  white-space: nowrap;
}
.area { position: relative; overflow: hidden; border-radius: 12px; display: flex; flex-direction: column; }
.image, .props { border-radius: 12px 0 0 12px; }
.view3d { background: #14171c; }
.image { background: #1a2028; }
.nodes { background: #121920; }
.props { background: #1a232c; }
.scene { position: absolute; left: 0; top: 0; }
.axis text { font: 600 20px Inter, sans-serif; text-anchor: middle; fill: rgba(0, 0, 0, .6); text-shadow: none; }
svg { display: block; flex: none; }
.ico { width: 28px; height: 28px; fill: none; stroke: currentColor; stroke-width: 2; }
.sm { width: 26px; height: 26px; }
.chev, .drop svg, .nhead svg { width: 14px; height: 10px; fill: none; stroke: #e2e3e4; stroke-width: 2.1; }
.chev { position: relative; top: 1px; }

.bar { position: relative; display: flex; align-items: center; height: 48px; flex: none; }
.view3d .bar { height: 47px; }
.image .bar { background: #111a21; height: 48px; }
.nodes .bar { background: #1c2832; box-sizing: border-box; padding-top: 1px; }
.props .bar { background: #172430; }
.item { box-sizing: border-box; height: 35px; display: flex; align-items: center; flex: none; border-radius: 7px; padding: 0 4px 0 7px; box-shadow: 0 0 0 1.500px rgba(28, 34, 52, .45); }
.item .chev { margin-left: auto; margin-right: 1px; }
.item .lbl { margin-left: 14px; }
.dark { background: #030509; }
.dark.wide .lbl { margin-left: 8px; }
.dark.wide .chev { margin-right: 1px; }
.clip { padding: 0; overflow: hidden; border-radius: 0 7px 7px 0; }
.clip .chev { margin: 0 0 0 -4px; }
.menu { background: #1d2731; justify-content: center; padding: 0; box-shadow: none; }
.menu .lbl, .plain .lbl, .name .lbl { margin: 0; }
.plain { padding: 0; box-shadow: none; }
.btn { background: #0c1118; box-shadow: 0 0 0 1.500px #1b2332; }
.btn .lbl { margin-left: 20px; }
.new { padding-left: 9px; } .new .lbl { margin-left: 19px; }
.open-file { padding-left: 8px; }
.tog { background: #1c2232; height: 38px; box-shadow: none; }
.on { background: #284a72; box-shadow: none; color: #fff; }
.ghost { background: #18212b; color: #474e57; }
.name { background: #0b0d14; height: 40px; padding-left: 16px; box-shadow: none; color: #fff; letter-spacing: .55px; }
.mid, .solo { justify-content: center; padding: 0; }
.solo .chev { margin: 1px 0 0; }
.tight { padding-left: 3px; }
.flush { padding: 0; }
.snug { padding-left: 5px; }
.left { border-radius: 7px 0 0 7px; }
.right { border-radius: 0 7px 7px 0; }
.flat { border-radius: 0; }
.dim { color: #93969a; }
.grey { color: #777c86; }
.faint { background: #0d1015; color: #606366; }
.faint .chev { stroke: #3c3f42; }

.subbar { position: relative; display: flex; align-items: center; height: 43px; margin-top: 5px; padding-left: 27px; }
.seltool { box-sizing: border-box; width: 43px; height: 43px; display: grid; place-items: center; background: repeating-linear-gradient(90deg, #f5a623 0 7px, transparent 7px 10px) top / 100% 2px no-repeat, repeating-linear-gradient(90deg, #f5a623 0 7px, transparent 7px 10px) bottom / 100% 2px no-repeat, repeating-linear-gradient(#f5a623 0 7px, transparent 7px 10px) left / 2px 100% no-repeat, repeating-linear-gradient(#f5a623 0 7px, transparent 7px 10px) right / 2px 100% no-repeat; }
.modes { display: flex; gap: 1px; margin-left: 13px; height: 36px; border-radius: 7px; overflow: hidden; background: #17191c; }
.modes span { width: 36px; display: grid; place-items: center; background: #08090a; color: #aeb0b0; }
.modes .cur { background: #1c3650; color: #fff; }
.options { width: 87px; margin-left: 1175px; }
.options .lbl { margin-left: 7px; }
.filt { width: 38px; margin-left: 33px; }
.set { width: 35px; margin-left: 13px; }
.info { position: relative; margin: 17px 0 0 17px; line-height: 35.500px; text-shadow: 0 1px 2px #000; }
.latin { letter-spacing: .38px; }
.edge { position: absolute; width: 9px; height: 18px; fill: none; stroke: #9a9c9e; stroke-width: 1.800; background: rgba(0, 0, 0, .12); }
.el { left: 0; top: 132px; } .er { right: 1px; top: 131px; }
.il { left: 0; top: 81px; } .ir { right: 0; top: 81px; }
.nl { left: 0; top: 34px; } .nr { right: 1px; top: 34px; }
.uvbtn { position: absolute; left: -8px; top: 470px; width: 54px; height: 54px; border-radius: 50%; background: rgba(14, 14, 20, .8); display: grid; place-items: center; }
.uvbtn .ico { margin-right: 1px; }
.nav { position: absolute; right: 16px; top: 274px; display: flex; flex-direction: column; gap: 5px; }
.nav span { width: 54px; height: 54px; border-radius: 50%; background: rgba(12, 12, 17, .75); display: grid; place-items: center; }
.nav span + .add { margin-top: 70px; }
.nav .add, .nav .addb { background: #181a1c; margin-left: 2px; margin-right: -2px; }
.inav { right: 16px; top: 66px; }
.inav span { background: rgba(8, 10, 12, .4); }

.uvgrid { margin-top: 57px; }

.canvas { position: relative; flex: 1; overflow: hidden; }
.crumbs { display: flex; align-items: center; height: 28px; margin: 30px 0 0 34px; }
.c1 { margin: 0 33px 0 18px; } .c2 { margin: 0 33px 0 18px; } .c3 { margin-left: 19px; letter-spacing: .55px; }
.sep { width: 10px; height: 18px; margin-right: 19px; fill: none; stroke: #c8cacc; stroke-width: 2; }
.node { position: absolute; width: 180px; border-radius: 6px; background: #1a2535; font-size: 14px; line-height: 20px; box-shadow: 0 0 0 1.500px #080e19, 0 3px 9px 3px rgba(0, 0, 0, .5); }
.nhead { height: 27px; box-sizing: border-box; border-radius: 6px 6px 0 0; border-bottom: 1px solid #141b26; display: flex; align-items: center; padding: 0 0 1px 13px; }
.nhead svg { margin: -3px 6px 0 0; stroke-width: 1.500; }
.attr .nhead { background: #69273d; }
.mesh .nhead { background: #14645d; }
.plainhead .nhead { background: #1b222c; }
.nbody { display: flex; flex-direction: column; padding: 4px 15px 0; }
.row { position: relative; height: 27.700px; display: flex; align-items: center; }
.out { justify-content: flex-end; }
.in > span { margin-left: -1px; }
.sock { position: absolute; width: 18px; height: 18px; top: 4.500px; }
.out .sock { right: -24px; }
.in .sock { left: -24px; }
.drop { height: 22px; margin: 10px -1px 3px 0; background: #030509; border-radius: 4px; display: flex; align-items: center; justify-content: space-between; padding: 0 3px 0 7px; }
.drop svg { width: 9px; height: 7px; }
.seg { height: 24px; display: flex; margin: 9px 0 2px -1px; border-radius: 4px; overflow: hidden; background: #0b1017; box-shadow: 0 0 0 1px #20201f; }
.seg span { flex: 0 0 74px; display: grid; place-items: center; color: #fff; }
.seg .cur { flex: 1; background: #1a3550; }
.fieldbox { flex: 1; height: 26px; margin: 0 -1px; background: #0b0d14; border-radius: 4px; display: flex; align-items: center; padding: 0 6px 0 5px; color: #fff; }
.fieldbox .ico { width: 19px; height: 19px; margin-right: 9px; }
.fieldbox .x { width: 16px; height: 16px; margin-left: auto; fill: none; stroke: #bbb; stroke-width: 2.400; }
.cb { width: 17px; height: 17px; margin: 0 5px 0 -1px; border-radius: 3px; background: #0a0a0a; }
.valuebox { box-sizing: border-box; width: 87px; height: 26px; margin: 0 -2px 0 auto; padding-left: 10px; background: #0b0d14; border-radius: 4px; line-height: 26px; color: #fff; }
.space { height: 4px; }
.vector { height: 77px; box-sizing: border-box; margin: 0 -2px 0 -3px; padding: 0 20px; border-radius: 4px; background: #0f121c; }
.vector div { display: flex; justify-content: space-between; line-height: 25px; }
.links { position: absolute; left: 0; top: 0; pointer-events: none; }
.vscroll { position: absolute; right: 4px; top: 19px; width: 7px; height: 861px; border-radius: 4px; background: #1e2932; }
.hscroll { position: absolute; left: 178px; right: 17px; bottom: 3px; height: 6px; border-radius: 3px; background: #1e2932; }

.ptype { width: 58px; margin-left: 15px; }
.search { box-sizing: border-box; width: 225px; height: 39px; margin-left: 182px; padding-left: 10px; background: #0b0d14; border-radius: 6px; display: flex; align-items: center; color: #fff; }
.search span { color: #6c6e70; margin-left: 13px; }
.pmore { width: 35px; margin-left: 199px; }
.pmain { display: flex; flex: 1; }
.tabs { width: 55px; box-sizing: border-box; padding: 15px 0 0 4px; background: #0f1a22; display: flex; flex-direction: column; gap: 14px; }
.tgroup { display: flex; flex-direction: column; }
.tgroup span { height: 54.300px; display: grid; place-items: center; border-radius: 9px 0 0 9px; background: #0c1119; color: #bfc0c1; }
.tgroup .red { color: #b95c66; }
.tgroup .orange { color: #c6834c; }
.tgroup .orange :deep(g) { stroke: #7b533a; }
.tgroup .blue { color: #6694d3; }
.tgroup .active { background: #23374b; color: #00d6a3; }
.panels { width: 644px; margin-left: 15px; }
.pbody { background: #1a2026; border-radius: 0 0 8px 8px; }
.first { border-top: 1px solid #2b3443; height: 232px; margin-bottom: 3px; }
.listrow { display: flex; padding: 15px 0 0 15px; gap: 17px; }
.list { position: relative; box-sizing: border-box; width: 560px; border: 2px solid #45413e; border-radius: 8px; background: #171b22; }
.tall { height: 154px; } .short { height: 116px; padding: 9px; }
.tri { position: absolute; left: 20px; bottom: 12px; border-left: 12px solid #bfc0c1; border-top: 6px solid transparent; border-bottom: 6px solid transparent; }
.grip { position: absolute; left: 286px; bottom: 12px; width: 21px; height: 10px; background: radial-gradient(circle at 1.500px 1.500px, #c5c7c9 1.300px, transparent 1.600px) 0 0 / 6px 7px; }
.side { display: flex; flex-direction: column; margin-top: 1px; }
.sb { width: 35px; height: 35px; display: grid; place-items: center; background: #0a0e14; color: #e2e3e4; box-shadow: 0 0 0 1.500px #1b2332; }
.top { border-radius: 6px 6px 0 0; } .bot { border-radius: 0 0 6px 6px; margin-top: 2px; height: 37px; }
.off { background: #141920; color: #54575b; }
.more { background: #030509; border-radius: 6px; margin-top: 16px; }
.big { width: 18px; height: 14px; }
.checkrow { display: flex; align-items: center; margin: 15px 0 0 16px; }
.pcb { width: 26px; height: 26px; border-radius: 5px; background: #0a0a0a; margin-right: 8px; }
.phead { position: relative; box-sizing: border-box; height: 48px; margin-bottom: 3px; padding-top: 1px; border-radius: 8px; background: #2b3443; display: flex; align-items: center; padding-left: 15px; font-size: 23px; color: #d3d5d7; }
.phead svg { width: 18px; height: 18px; margin-right: 9px; fill: none; stroke: #b7babd; stroke-width: 1.800; }
.narrow { letter-spacing: -.34px; }
.open { border-radius: 8px 8px 0 0; margin-bottom: 0; }
.g2 { left: auto; right: 13px; bottom: 19px; background: radial-gradient(circle at 1.500px 1.500px, #8d939c 1.200px, transparent 1.500px) 0 0 / 6px 6px; }
.uvb { height: 145px; margin-bottom: 3px; }
.sel { height: 35px; border-radius: 5px; background: #355876; display: flex; align-items: center; padding: 0 4px 0 8px; color: #fff; }
.sel span { margin: 0 auto 0 13px; }
.qb { height: 69px; margin-bottom: 3px; display: flex; align-items: center; padding: 0 17px; }
.qb .item { width: 457px; margin-left: auto; }
.qb .lbl { margin-left: 7px; }
.pscroll { width: 7px; margin: 19px 0 0 5px; height: 872px; border-radius: 4px; background: #17212a; }
.pscroll i { display: block; height: 554px; margin-top: 319px; border-radius: 4px; background: #1f2b35; }
</style>
